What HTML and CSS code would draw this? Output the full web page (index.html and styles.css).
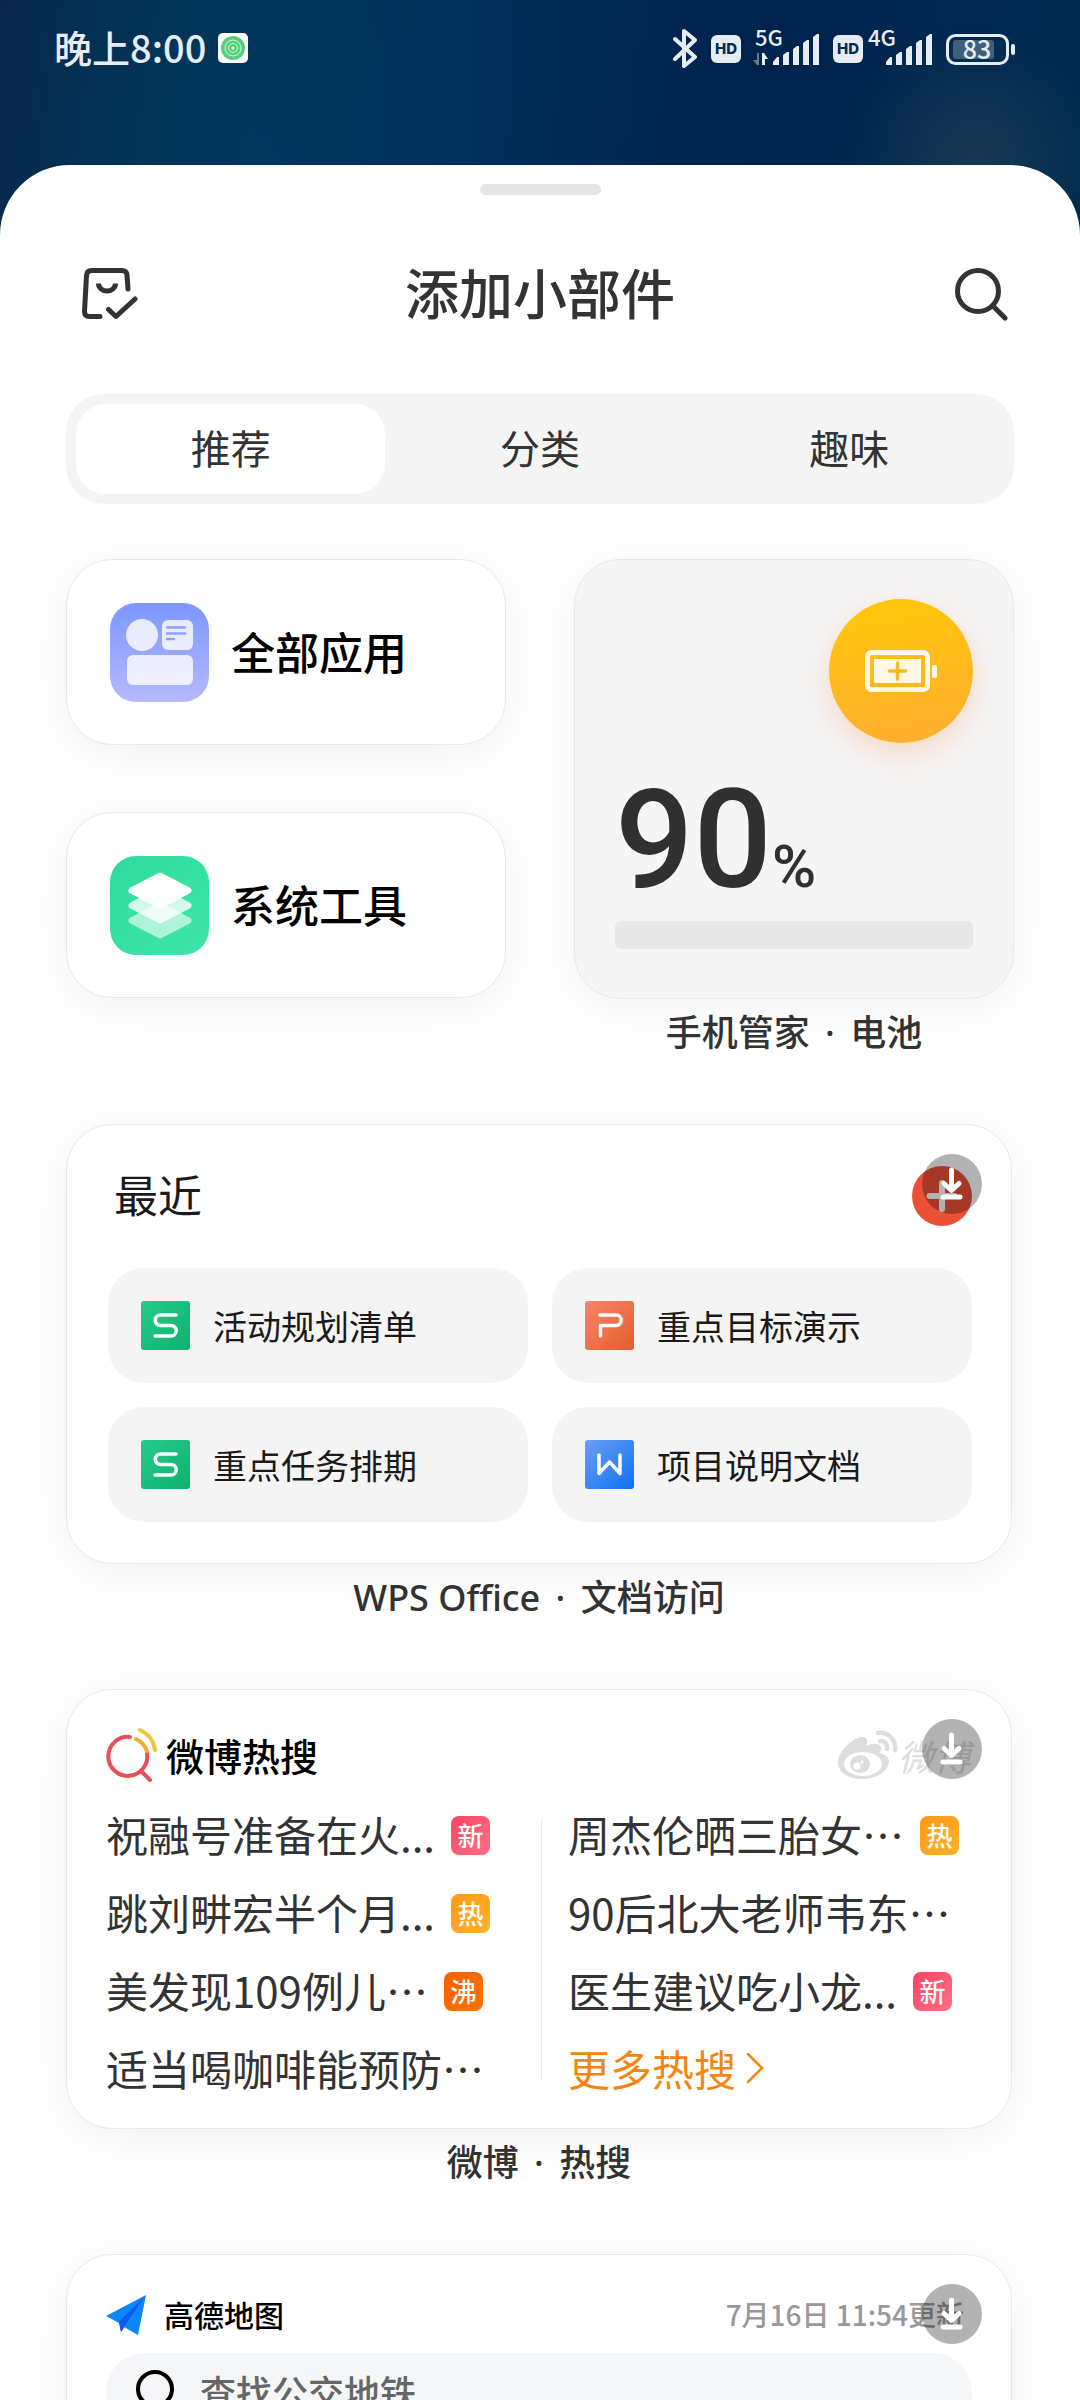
FILE: index.html
```html
<!DOCTYPE html>
<html lang="zh-CN">
<head>
<meta charset="utf-8">
<meta name="viewport" content="width=device-width, initial-scale=1">
<title>添加小部件</title>
<link rel="stylesheet" href="styles.css">
</head>
<body>
<header class="status">
  <div class="status-side">
    <span class="clock">晚上8:00</span>
    <svg class="status-app" viewBox="0 0 30 30" aria-hidden="true">
      <rect width="30" height="30" rx="5" fill="#fff"/>
      <circle cx="15" cy="15" r="12" fill="#56cf7b"/>
      <g fill="none" stroke="#d5f7de" stroke-width="1"><circle cx="15" cy="15" r="8"/><circle cx="15" cy="15" r="4.500"/></g>
      <circle cx="15" cy="15" r="1.500" fill="#fff"/>
    </svg>
  </div>
  <div class="status-side status-icons">
    <svg width="26" height="40" viewBox="0 0 26 40" fill="none" stroke="#e6ecf2" stroke-width="4" stroke-linecap="round" stroke-linejoin="round" aria-label="蓝牙"><path d="M3 11L23 29L12 38V3L23 12L3 31"/></svg>
    <svg width="109" height="64" viewBox="0 -12 109 64" fill="#e6ecf2">
      <rect y="7" width="30" height="28" rx="6"/>
      <text class="hd" x="15" y="26">HD</text>
      <text class="net" x="44" y="18">5G</text>
      <path d="M48 25v12h-2l-4-5h4v-7z" opacity=".45"/><path d="M51 37V25h2l4 6h-3v6z"/>
      <path d="M62 37v-3l4-5h2v8zM72 37V27l4-3h2v13zM82 37V21l4-3h2v19zM92 37V15l4-3h2v25zM102 37V9l4-3h2v31z"/>
    </svg>
    <svg width="100" height="64" viewBox="0 -12 100 64" fill="#e6ecf2">
      <rect y="7" width="30" height="28" rx="6"/>
      <text class="hd" x="15" y="26">HD</text>
      <text class="net" x="35" y="18">4G</text>
      <path d="M53 37v-3l4-5h2v8zM63 37V27l4-3h2v13zM73 37V21l4-3h2v19zM83 37V15l4-3h2v25zM93 37V9l4-3h2v31z"/>
    </svg>
    <svg width="69" height="40" viewBox="0 0 69 40">
      <rect x="1.500" y="7.500" width="60" height="28" rx="8" fill="none" stroke="#e6ecf2" stroke-width="3"/>
      <rect x="7" y="12" width="41" height="19" rx="3" fill="#40607a"/>
      <rect x="65" y="16" width="4" height="11" rx="2" fill="#e6ecf2"/>
      <text class="level" x="31" y="31">83</text>
    </svg>
  </div>
</header>

<main class="sheet">
  <div class="handle"></div>
  <div class="titlebar">
    <button class="icon-button" aria-label="已添加">
      <svg width="56" height="52" viewBox="0 0 56 52" fill="none" stroke="#333" stroke-width="5" stroke-linecap="round" stroke-linejoin="round"><path d="M18 48.500H7.500Q2.500 48.500 2.500 43.500L4.500 7.500Q5 2.500 9.500 2.500H40Q44.500 2.500 45 7L46 21"/><path d="M16.500 15.500a8.500 7.500 0 0 0 17 0" stroke-linecap="butt"/><path d="M26.500 41.500L34 48.500L53 31"/></svg>
    </button>
    <h1>添加小部件</h1>
    <button class="icon-button" aria-label="搜索">
      <svg width="54" height="54" viewBox="0 0 54 54" fill="none" stroke="#333" stroke-width="5" stroke-linecap="round"><circle cx="24" cy="24" r="20.500"/><path d="M39 39L51 51"/></svg>
    </button>
  </div>
  <div class="tabs" role="tablist">
    <button class="tab tab-active" role="tab" aria-selected="true">推荐</button>
    <button class="tab" role="tab" aria-selected="false">分类</button>
    <button class="tab" role="tab" aria-selected="false">趣味</button>
  </div>

  <div class="top-grid">
    <div class="shortcuts">
      <button class="card shortcut">
        <svg width="99" height="99" viewBox="0 0 99 99" aria-hidden="true">
          <defs><linearGradient id="apps" x1="0" y1="0" x2="0" y2="1"><stop offset="0" stop-color="#7b97ff"/><stop offset="1" stop-color="#b6b9fe"/></linearGradient></defs>
          <rect width="99" height="99" rx="26" fill="url(#apps)"/>
          <g fill="#fff" opacity=".8"><circle cx="32" cy="32" r="16"/><rect x="52" y="17" width="31" height="30" rx="6"/><rect x="17" y="52" width="66" height="30" rx="6"/></g>
          <path d="M57 24.500h18M57 30.500h18M57 36h7" stroke="#8ea1fa" stroke-width="2.500" stroke-linecap="round"/>
        </svg>
        <span>全部应用</span>
      </button>
      <button class="card shortcut">
        <svg width="99" height="99" viewBox="0 0 99 99" aria-hidden="true">
          <defs><linearGradient id="tools" x1="0" y1="0" x2="1" y2="1"><stop offset="0" stop-color="#2edb9e"/><stop offset="1" stop-color="#40e5a8"/></linearGradient></defs>
          <rect width="99" height="99" rx="26" fill="url(#tools)"/>
          <g fill="#fff" stroke="#fff" stroke-width="7" stroke-linejoin="round">
            <path opacity=".6" d="M50 50L78 64.500L50 79L22 64.500z"/>
            <path opacity=".8" d="M50 35L78 49.500L50 64L22 49.500z"/>
            <path d="M50 20L78 34.500L50 49L22 34.500z"/>
          </g>
        </svg>
        <span>系统工具</span>
      </button>
    </div>
    <section class="widget">
      <div class="card battery">
        <div class="battery-badge">
          <svg width="72" height="42" viewBox="0 0 72 42" aria-hidden="true">
            <rect x="2.500" y="2.500" width="60" height="37" rx="4" fill="none" stroke="#fffae6" stroke-width="5"/>
            <rect x="9" y="9" width="47" height="24" fill="#fff8e6"/>
            <rect x="67" y="15" width="5" height="13" rx="2" fill="#fffae6"/>
            <path d="M32.500 13v16M24.500 21h16" stroke="#fdb825" stroke-width="3.500" stroke-linecap="round"/>
          </svg>
        </div>
        <p class="battery-value">90<small>%</small></p>
        <div class="battery-track"></div>
      </div>
      <h2 class="caption">手机管家 <span class="dot">·</span> 电池</h2>
    </section>
  </div>

  <section class="widget widget-wide">
    <div class="card wps">
      <div class="wps-head">
        <h3>最近</h3>
        <button class="wps-add" aria-label="新建"><svg width="60" height="60" viewBox="0 0 60 60"><circle cx="30" cy="30" r="30" fill="#eb5036"/><path d="M30 17v26M17.500 30h25" stroke="#fff" stroke-width="6" stroke-linecap="round"/></svg></button>
      </div>
      <div class="files">
        <a class="file" href="#"><svg viewBox="0 0 49 49"><defs><linearGradient id="sheet" x1="0" y1="0" x2="1" y2="1"><stop offset="0" stop-color="#26cb8a"/><stop offset="1" stop-color="#0eb16d"/></linearGradient></defs><rect width="49" height="49" rx="3" fill="url(#sheet)"/><path d="M35 14H19.500a5.200 5.200 0 0 0 0 10.500H30a5.200 5.200 0 0 1 0 10.500H14"/></svg><span>活动规划清单</span></a>
        <a class="file" href="#"><svg viewBox="0 0 49 49"><defs><linearGradient id="slides" x1="0" y1="0" x2="1" y2="1"><stop offset="0" stop-color="#f5866a"/><stop offset="1" stop-color="#e55e2c"/></linearGradient></defs><rect width="49" height="49" rx="3" fill="url(#slides)"/><path d="M15 14H31a5.200 5.200 0 0 1 0 10.500H15.500V35"/></svg><span>重点目标演示</span></a>
        <a class="file" href="#"><svg viewBox="0 0 49 49"><rect width="49" height="49" rx="3" fill="url(#sheet)"/><path d="M35 14H19.500a5.200 5.200 0 0 0 0 10.500H30a5.200 5.200 0 0 1 0 10.500H14"/></svg><span>重点任务排期</span></a>
        <a class="file" href="#"><svg viewBox="0 0 49 49"><defs><linearGradient id="doc" x1="0" y1="0" x2="1" y2="1"><stop offset="0" stop-color="#6a9ef6"/><stop offset="1" stop-color="#0f72f2"/></linearGradient></defs><rect width="49" height="49" rx="3" fill="url(#doc)"/><path d="M14 15V33.500L24.500 22L35 33.500V15"/></svg><span>项目说明文档</span></a>
      </div>
      <button class="download" aria-label="下载"><svg viewBox="0 0 60 60"><path d="M29.500 16V36M22 29.500L29.500 36.500L37 29.500M21 43H38"/></svg></button>
    </div>
    <h2 class="caption">WPS Office <span class="dot">·</span> 文档访问</h2>
  </section>

  <section class="widget widget-wide">
    <div class="card weibo">
      <div class="weibo-head">
        <svg width="52" height="54" viewBox="0 0 52 54" fill="none" stroke-width="4" stroke-linecap="round" aria-hidden="true">
          <path d="M24 9A19.500 19.500 0 1 0 41 25" stroke="#e5505a"/><path d="M35 43L44 52" stroke="#e5505a"/>
          <path d="M30 11Q38 15 41 23" stroke="#f0ae32"/><path d="M34 2Q47 8 49 22" stroke="#f2c53b"/>
        </svg>
        <h3>微博热搜</h3>
        <div class="weibo-brand">
          <svg width="60" height="50" viewBox="0 0 60 50" aria-hidden="true">
            <path d="M0 33C0 22 14 8 24 7C30 7 30 12 28 16C34 13 42 13 43 17C44 20 42 22 41 23C47 24 51 27 51 31C51 41 39 49 24 49C10 49 0 42 0 33z" fill="#ddd"/>
            <ellipse cx="25" cy="34" rx="19" ry="12" fill="#fff"/>
            <ellipse cx="22" cy="34" rx="10" ry="9" fill="#ddd"/><circle cx="19" cy="36" r="3.500" fill="#fff"/><circle cx="24" cy="32" r="1.500" fill="#fff"/>
            <path d="M40 3A15 15 0 0 1 57 20M42 11Q50 11 49 19" fill="none" stroke="#ddd" stroke-width="4.500" stroke-linecap="round"/>
          </svg>
          <em>微博</em>
        </div>
      </div>
      <div class="topics">
        <ul>
          <li><a href="#">祝融号准备在火...</a><b class="tag tag-new">新</b></li>
          <li><a href="#">跳刘畊宏半个月...</a><b class="tag tag-hot">热</b></li>
          <li><a href="#">美发现109例儿…</a><b class="tag tag-boil">沸</b></li>
          <li><a href="#">适当喝咖啡能预防…</a></li>
        </ul>
        <ul>
          <li><a href="#">周杰伦晒三胎女…</a><b class="tag tag-hot">热</b></li>
          <li><a href="#">90后北大老师韦东…</a></li>
          <li><a href="#">医生建议吃小龙...</a><b class="tag tag-new">新</b></li>
          <li><a class="more" href="#">更多热搜<svg width="18" height="32" viewBox="0 0 18 32" fill="none" stroke="#f5850f" stroke-width="2.500" stroke-linecap="round"><path d="M2 2L16 16L2 30"/></svg></a></li>
        </ul>
      </div>
      <button class="download" aria-label="下载"><svg viewBox="0 0 60 60"><path d="M29.500 16V36M22 29.500L29.500 36.500L37 29.500M21 43H38"/></svg></button>
    </div>
    <h2 class="caption">微博 <span class="dot">·</span> 热搜</h2>
  </section>

  <section class="widget widget-wide">
    <div class="card map">
      <div class="map-head">
        <svg width="40" height="40" viewBox="0 0 40 40" aria-hidden="true"><path d="M0 21L40 0L13 28z" fill="#0a86ff"/><path d="M13 27L40 0L15 37z" fill="#0650e0"/><path d="M40 0L32 40L18 32z" fill="#0a86ff"/><path d="M13 27L40 0L18 32L15 37z" fill="#0b5cf0"/></svg>
        <h3>高德地图</h3>
        <time>7月16日 11:54更新</time>
      </div>
      <label class="map-search">
        <svg width="44" height="48" viewBox="0 0 44 48" fill="none" stroke="#000" stroke-width="4" stroke-linecap="round" aria-hidden="true"><circle cx="21" cy="22" r="17"/><path d="M33 35L41 43"/></svg>
        <input type="text" placeholder="查找公交地铁" aria-label="查找公交地铁">
      </label>
      <button class="download" aria-label="下载"><svg viewBox="0 0 60 60"><path d="M29.500 16V36M22 29.500L29.500 36.500L37 29.500M21 43H38"/></svg></button>
    </div>
  </section>
</main>
</body>
</html>
```
FILE: styles.css
```css
* { box-sizing: border-box; }

body {
  margin: 0;
  height: 100vh;
  display: flex;
  flex-direction: column;
  overflow: hidden;
  font-family: "Noto Sans CJK SC", sans-serif;
  color: #333;
  background:
    radial-gradient(circle at 90% 160px, rgba(40, 66, 82, .6), transparent 130px),
    radial-gradient(ellipse at 24% 200px, rgba(0, 60, 102, .6), transparent 340px),
    linear-gradient(100deg, #0a2548 0%, #003150 13%, #002e58 30%, #00234d 52%, #002a52 68%, #002d4a 82%, #001a33 97%);
}

h1, h2, h3, p, ul { margin: 0; padding: 0; font-weight: 400; }
ul { list-style: none; }
svg { display: block; flex: none; }
a { color: inherit; text-decoration: none; }
button { border: 0; padding: 0; background: none; font: inherit; color: inherit; }

.status {
  flex: none;
  height: 165px;
  padding: 28px 65px 0 54px;
  display: flex;
  justify-content: space-between;
  align-items: flex-start;
}
.status-side { display: flex; align-items: center; height: 40px; gap: 12px; }
.status-icons { gap: 13px; }
.status-app { width: 30px; height: 30px; }
.clock { font-size: 38px; line-height: 38px; padding-bottom: 2px; font-weight: 500; color: #e6ecf2; }
.hd { font: 800 15px Inter, sans-serif; fill: #052c50; text-anchor: middle; }
.net { font: 500 22px "Noto Sans CJK SC", sans-serif; fill: #e6ecf2; }
.level { font: 500 25px "Noto Sans CJK SC", sans-serif; fill: #e6ecf2; text-anchor: middle; }

.sheet {
  flex: 1;
  min-height: 0;
  overflow: hidden;
  padding: 19px 66px 0;
  border-radius: 70px 70px 0 0;
  background: #fff;
}
.handle { width: 121px; height: 11px; margin: 0 auto; border-radius: 6px; background: #e6e6e6; }
.titlebar {
  height: 199px;
  padding: 0 6px 2px 16px;
  display: grid;
  grid-template-columns: 56px 1fr 66px;
  align-items: center;
}
.titlebar h1 { padding-bottom: 4px; font-size: 54px; line-height: 72px; font-weight: 500; text-align: center; }
.icon-button { justify-self: end; }

.tabs {
  padding: 10px;
  display: grid;
  grid-template-columns: repeat(3, 1fr);
  border-radius: 38px;
  background: #f4f4f4;
}
.tab { height: 90px; padding-bottom: 4px; border-radius: 30px; font-size: 40px; line-height: 60px; }
.tab-active { background: #fff; }

.card {
  position: relative;
  border: 1px solid #e8e8e8;
  border-radius: 46px;
  background: #fff;
  box-shadow: 0 8px 50px rgba(0, 0, 0, .06);
}
.top-grid { margin-top: 55px; display: grid; grid-template-columns: 1fr 1fr; gap: 68px; align-items: start; }
.shortcuts { display: grid; gap: 67px; }
.shortcut {
  width: 100%;
  height: 186px;
  padding: 0 43px;
  display: flex;
  align-items: center;
  gap: 22px;
  font-size: 44px;
  line-height: 60px;
  font-weight: 500;
  color: #000;
}
.shortcut span { padding-bottom: 2px; }

.widget { margin-bottom: 64px; }
.widget-wide { margin-right: 2px; }
.caption {
  margin-top: 7px;
  font: 500 36px/54px "Noto Sans", "Noto Sans CJK SC", sans-serif;
  text-align: center;
}
.dot { margin: 0 6px; }

.battery { height: 440px; padding: 39px 40px 49px; display: flex; flex-direction: column; background: #f5f5f5; }
.battery-badge {
  flex: none;
  align-self: flex-end;
  width: 144px;
  height: 144px;
  display: grid;
  place-items: center;
  border-radius: 50%;
  background: linear-gradient(170deg, #ffc907, #ffac33);
  box-shadow: 0 10px 28px rgba(255, 150, 80, .3);
}
.battery-value { margin-top: auto; font: 500 138px/138px Roboto, sans-serif; color: #303030; }
.battery-value small { font-size: 60px; line-height: 60px; }
.battery-track { flex: none; height: 28px; margin-top: 12px; border-radius: 6px; background: #e8e8e8; }

.download {
  position: absolute;
  top: 29px;
  right: 29px;
  width: 60px;
  height: 60px;
  border-radius: 50%;
  background: rgba(0, 0, 0, .3);
}
.download svg { fill: none; stroke: #fff; stroke-width: 5px; stroke-linecap: round; stroke-linejoin: round; }

.wps { padding: 41px 39px 41px 41px; }
.wps-head { height: 102px; padding-left: 6px; display: flex; justify-content: space-between; align-items: flex-start; }
.wps-head h3 { font-size: 44px; line-height: 56px; color: #1a1a1a; }
.files { display: grid; grid-template-columns: 1fr 1fr; gap: 24px; }
.file {
  height: 115px;
  padding: 0 33px;
  display: flex;
  align-items: center;
  gap: 23px;
  border-radius: 36px;
  background: #f4f4f4;
  font-size: 34px;
  line-height: 48px;
  color: #1a1a1a;
}
.file svg { width: 49px; height: 49px; }
.file path { fill: none; stroke: #fff; stroke-width: 3.5px; stroke-linecap: round; stroke-linejoin: round; }

.weibo { height: 440px; padding: 38px 39px 0; }
.weibo-head { height: 54px; display: flex; align-items: center; gap: 8px; }
.weibo-head h3 { font-size: 38px; line-height: 54px; font-weight: 500; color: #000; }
.weibo-brand { margin-left: auto; padding-right: 2px; display: flex; align-items: center; color: #ddd; }
.weibo-brand em { font-size: 36px; line-height: 50px; }
.topics {
  margin-top: 14px;
  display: grid;
  grid-template-columns: 462px 1fr;
  background: linear-gradient(#eaeaea, #eaeaea) 435px 22px / 1px 262px no-repeat;
}
.topics li { height: 78px; display: flex; align-items: center; gap: 16px; font-size: 42px; line-height: 60px; white-space: nowrap; }
.topics a { padding-bottom: 2px; }
.more { display: flex; align-items: center; gap: 10px; color: #f5850f; }
.tag { width: 39px; height: 39px; border-radius: 8px; font-size: 26px; line-height: 38px; font-weight: 500; text-align: center; color: #fff; }
.tag-new { background: linear-gradient(135deg, #fb4560, #ff7088); }
.tag-hot { background: linear-gradient(135deg, #ff9a14, #ffb02e); }
.tag-boil { background: linear-gradient(135deg, #f76000, #ff7400); }

.map { height: 440px; padding: 38px 39px 0; }
.map-head { height: 44px; padding-right: 8px; display: flex; align-items: center; gap: 18px; }
.map-head h3, .map-head time { padding-bottom: 2px; font-size: 30px; line-height: 42px; font-weight: 500; color: #000; }
.map-head time { margin-left: auto; font-size: 28px; color: #999; }
.map-search {
  height: 78px;
  margin-top: 16px;
  padding: 0 28px 2px;
  display: flex;
  align-items: center;
  gap: 22px;
  border-radius: 39px;
  background: #f5f6f8;
}
.map-search input { flex: 1; border: 0; padding: 0; background: none; font: 500 36px/54px "Noto Sans CJK SC", sans-serif; }
.map-search input::placeholder { color: #666; }
```
